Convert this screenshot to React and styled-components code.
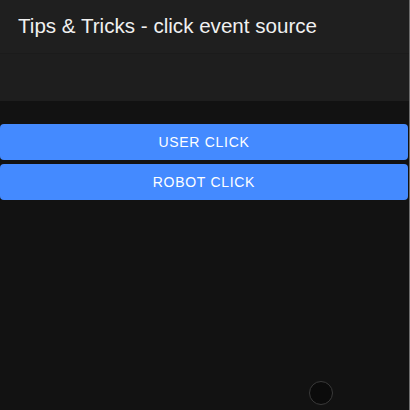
import React from "react";
import styled, { createGlobalStyle } from "styled-components";

const GlobalStyle = createGlobalStyle`
  html, body {
    margin: 0;
    padding: 0;
    background: #121212;
  }
  body {
    font-family: "Liberation Sans", Arial, sans-serif;
  }
`;

const Page = styled.div`
  width: 409px;
  height: 410px;
  background: #121212;
  border-right: 1px solid #6e6e6e;
  display: flex;
  flex-direction: column;
  position: relative;
  overflow: hidden;
`;

const Header = styled.header`
  height: 54px;
  background: #1f1f1f;
  display: flex;
  align-items: center;
  padding: 0 18px;
  border-bottom: 1px solid #1b1b1b;
  box-sizing: border-box;
`;

const Title = styled.h1`
  margin: 0;
  font-family: "Liberation Sans", Arial, sans-serif;
  font-size: 20.6px;
  font-weight: 400;
  color: #f0f0f0;
  padding-bottom: 1px;
`;

const Toolbar = styled.div`
  height: 47px;
  background: #1e1e1e;
`;

const Content = styled.main`
  padding-top: 23px;
  display: flex;
  flex-direction: column;
  gap: 4px;
  width: 408px;
`;

const Button = styled.button`
  height: 36px;
  width: 100%;
  border: none;
  border-radius: 4px;
  background: #448aff;
  color: #ffffff;
  font-family: "Liberation Sans", Arial, sans-serif;
  font-size: 14px;
  font-weight: 400;
  letter-spacing: 0.7px;
  text-transform: uppercase;
  cursor: pointer;
  padding: 0;
`;

const Dot = styled.div`
  position: absolute;
  left: 309px;
  top: 381px;
  width: 22px;
  height: 22px;
  border-radius: 50%;
  background: #0b0b0b;
  border: 1px solid #3a3a3a;
`;

export default function App() {
  return (
    <>
      <GlobalStyle />
      <Page>
        <Header>
          <Title>Tips &amp; Tricks - click event source</Title>
        </Header>
        <Toolbar />
        <Content>
          <Button>User click</Button>
          <Button>Robot click</Button>
        </Content>
        <Dot />
      </Page>
    </>
  );
}
